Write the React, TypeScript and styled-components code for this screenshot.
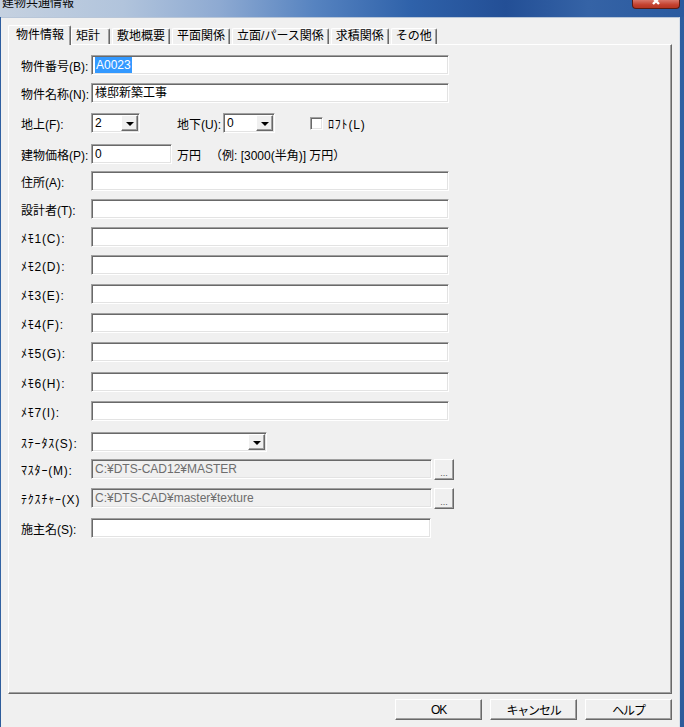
import React from 'react';
import styled, { createGlobalStyle, css } from 'styled-components';

const GlobalStyle = createGlobalStyle`
  html, body, #root {
    margin: 0;
    height: 100%;
  }
  body {
    font-family: "Liberation Sans", "Noto Sans CJK JP", sans-serif;
    font-size: 12px;
    color: #000;
    overflow: hidden;
  }
  * {
    box-sizing: border-box;
  }
`;

const tabs = ['物件情報', '矩計', '敷地概要', '平面関係', '立面/パース関係', '求積関係', 'その他'];

const memos = ['ﾒﾓ1(C):', 'ﾒﾓ2(D):', 'ﾒﾓ3(E):', 'ﾒﾓ4(F):', 'ﾒﾓ5(G):', 'ﾒﾓ6(H):', 'ﾒﾓ7(I):'];
const memoGaps = [8, 9, 9, 9, 10, 9];

const Arrow = () => <DropBtn><Triangle /></DropBtn>;

export default function App() {
  return (
    <Frame>
      <GlobalStyle />
      <TitleBar>
        <Title>建物共通情報</Title>
        <CloseBtn>
          <svg width="16" height="8" viewBox="0 0 16 8">
            <path d="M3 -4 L11 4 M13 -4 L5 4" stroke="#fff" strokeWidth="2.4" />
          </svg>
        </CloseBtn>
      </TitleBar>
      <Body>
        <Client>
          <TabStrip>
            {tabs.map((t, i) => (
              <Tab key={t} $active={i === 0}>{t}</Tab>
            ))}
          </TabStrip>
          <Panel>
            <Row $gap={0}>
              <Label>物件番号(B):</Label>
              <TextBox $w={358}><Selected>A0023</Selected></TextBox>
            </Row>
            <Row $gap={8}>
              <Label>物件名称(N):</Label>
              <TextBox $w={358}>様邸新築工事</TextBox>
            </Row>
            <Row $gap={10}>
              <Label>地上(F):</Label>
              <Combo $w={49}>2<Arrow /></Combo>
              <InlineLabel $ml={37}>地下(U):</InlineLabel>
              <Combo $w={52}>0<Arrow /></Combo>
              <CheckBox />
              <InlineLabel $ml={5} $ls={0.8}>ﾛﾌﾄ(L)</InlineLabel>
            </Row>
            <Row $gap={11}>
              <Label>建物価格(P):</Label>
              <TextBox $w={81}>0</TextBox>
              <InlineLabel $ml={5}>万円</InlineLabel>
              <InlineLabel $ml={7}>（例: [3000(半角)] 万円）</InlineLabel>
            </Row>
            <Row $gap={7}>
              <Label>住所(A):</Label>
              <TextBox $w={358} />
            </Row>
            <Row $gap={8}>
              <Label>設計者(T):</Label>
              <TextBox $w={358} />
            </Row>
            {memos.map((m, i) => (
              <Row key={m} $gap={i === 0 ? 8 : memoGaps[i - 1]}>
                <Label $ls={0.8}>{m}</Label>
                <TextBox $w={358} />
              </Row>
            ))}
            <Row $gap={11}>
              <Label $ls={0.8}>ｽﾃｰﾀｽ(S):</Label>
              <Combo $w={176}><Arrow /></Combo>
            </Row>
            <Row $gap={7}>
              <Label $ls={0.8}>ﾏｽﾀｰ(M):</Label>
              <TextBox $w={341} $disabled>C:¥DTS-CAD12¥MASTER</TextBox>
              <BrowseBtn>...</BrowseBtn>
            </Row>
            <Row $gap={9}>
              <Label $ls={0.8}>ﾃｸｽﾁｬｰ(X)</Label>
              <TextBox $w={341} $disabled>C:¥DTS-CAD¥master¥texture</TextBox>
              <BrowseBtn>...</BrowseBtn>
            </Row>
            <Row $gap={10}>
              <Label>施主名(S):</Label>
              <TextBox $w={340} />
            </Row>
          </Panel>
          <ButtonBar>
            <PushButton>OK</PushButton>
            <PushButton>キャンセル</PushButton>
            <PushButton>ヘルプ</PushButton>
          </ButtonBar>
        </Client>
      </Body>
    </Frame>
  );
}

const Frame = styled.div`
  height: 100vh;
  display: flex;
  flex-direction: column;
`;

const TitleBar = styled.div`
  height: 17px;
  flex: none;
  display: flex;
  align-items: flex-start;
  justify-content: space-between;
  overflow: hidden;
  padding-left: 2px;
  padding-right: 4px;
  background: linear-gradient(90deg, #c5d1e0 0%, #b1c4dc 18%, #8eaad2 32%, #5683c0 46%, #2f62aa 60%, #234f96 74%, #3563a6 86%, #2a5a9f 100%);
`;

const Title = styled.span`
  margin-top: -4px;
  font-size: 12px;
  line-height: 14px;
  color: #0a0a0a;
`;

const CloseBtn = styled.div`
  width: 48px;
  height: 9px;
  display: flex;
  justify-content: center;
  align-items: flex-start;
  background: linear-gradient(180deg, #d9766a 0%, #c4402e 60%, #b33523 100%);
  border: 1px solid #5a1a12;
  border-top: none;
  border-radius: 0 0 4px 4px;
`;

const Body = styled.div`
  flex: 1;
  display: flex;
  background: linear-gradient(180deg, #2d5d9f 0%, #3a6cad 60%, #2d5b9a 100%);
  padding: 0 4px 0 1px;
`;

const Client = styled.div`
  flex: 1;
  display: flex;
  flex-direction: column;
  background: #f0f0f0;
  border-top: 1px solid #b8c6d8;
  border-right: 1px solid #d8e0ea;
  padding: 7px 7px 0 7px;
`;

const TabStrip = styled.div`
  display: flex;
  align-items: flex-end;
  height: 19px;
  padding-left: 2px;
  position: relative;
  z-index: 1;
`;

const Tab = styled.div<{ $active?: boolean }>`
  height: 16px;
  min-width: 39px;
  margin-right: 2px;
  padding: 0 4px 0 4px;
  line-height: 15px;
  white-space: nowrap;
  background: #f0f0f0;
  border-top: 1px solid #fff;
  border-left: 1px solid #fff;
  border-right: 1px solid #696969;
  border-radius: 2px 2px 0 0;
  box-shadow: inset -1px 0 0 #a0a0a0;

  ${(p) =>
    p.$active &&
    css`
      height: 20px;
      margin: 0 0 -1px -2px;
      padding: 0 6px 0 7px;
      line-height: 19px;
    `}
`;

const Panel = styled.div`
  height: 650px;
  flex: none;
  display: flex;
  flex-direction: column;
  padding: 10px 0 0 12px;
  border-top: 1px solid #fff;
  border-left: 1px solid #fff;
  border-right: 1px solid #696969;
  border-bottom: 1px solid #696969;
  box-shadow: inset -1px -1px 0 #a0a0a0;
`;

const Row = styled.div<{ $gap: number }>`
  display: flex;
  align-items: center;
  height: 20px;
  margin-top: ${(p) => p.$gap}px;
`;

const Label = styled.span<{ $ls?: number }>`
  width: 70px;
  flex: none;
  white-space: nowrap;
  letter-spacing: ${(p) => p.$ls ?? 0}px;
`;

const InlineLabel = styled.span<{ $ml: number; $ls?: number }>`
  margin-left: ${(p) => p.$ml}px;
  margin-right: 2px;
  white-space: nowrap;
  letter-spacing: ${(p) => p.$ls ?? 0}px;
`;

const sunken = css`
  border: 1px solid;
  border-color: #a0a0a0 #fff #fff #a0a0a0;
  box-shadow: inset 1px 1px 0 #696969, inset -1px -1px 0 #e3e3e3;
`;

const TextBox = styled.div<{ $w: number; $disabled?: boolean }>`
  ${sunken};
  width: ${(p) => p.$w}px;
  height: 20px;
  flex: none;
  padding: 0 3px;
  line-height: 18px;
  white-space: nowrap;
  overflow: hidden;
  background: ${(p) => (p.$disabled ? '#f0f0f0' : '#fff')};
  color: ${(p) => (p.$disabled ? '#6d6d6d' : '#000')};
`;

const Selected = styled.span`
  background: #3399ff;
  color: #fff;
  padding: 1px 1px;
`;

const Combo = styled.div<{ $w: number }>`
  ${sunken};
  width: ${(p) => p.$w}px;
  height: 20px;
  flex: none;
  display: flex;
  align-items: center;
  justify-content: space-between;
  padding: 0 1px 0 3px;
  background: #fff;
`;

const raised = css`
  background: #f0f0f0;
  border: 1px solid;
  border-color: #fff #696969 #696969 #fff;
  box-shadow: inset -1px -1px 0 #a0a0a0;
`;

const DropBtn = styled.div`
  ${raised};
  width: 17px;
  height: 16px;
  margin-left: auto;
  display: flex;
  align-items: center;
  justify-content: center;
`;

const Triangle = styled.div`
  width: 0;
  height: 0;
  border-left: 4px solid transparent;
  border-right: 4px solid transparent;
  border-top: 4px solid #000;
  margin-top: 1px;
`;

const CheckBox = styled.div`
  ${sunken};
  width: 13px;
  height: 13px;
  margin-left: 35px;
  background: #fff;
`;

const BrowseBtn = styled.div`
  ${raised};
  width: 20px;
  height: 21px;
  margin-left: 2px;
  display: flex;
  align-items: flex-end;
  justify-content: center;
  font-size: 9px;
  line-height: 12px;
  color: #555;
`;

const ButtonBar = styled.div`
  display: flex;
  justify-content: flex-end;
  gap: 8px;
  margin-top: 5px;
`;

const PushButton = styled.div`
  ${raised};
  width: 87px;
  height: 21px;
  display: flex;
  align-items: center;
  justify-content: center;
  letter-spacing: -1.2px;
`;
